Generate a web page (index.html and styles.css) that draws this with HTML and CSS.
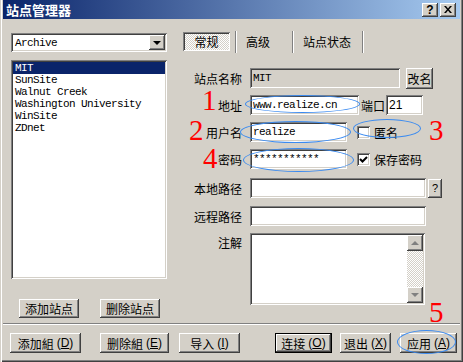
FILE: index.html
```html
<!DOCTYPE html>
<html>
  <head>
    <meta charset="utf-8" />
    <title>站点管理器</title>
    <link rel="stylesheet" href="styles.css">
  </head>
  <body>
    <div class="window">
      <div class="titlebar">
        <span class="titlebar__text">站点管理器</span>
        <div class="titlebar__buttons">
          <span class="tbtn">?</span>
          <span class="tbtn">
            <svg width="8" height="7" viewBox="0 0 8 7"><path d="M0 0h2l2 2.5 2-2.5h2l-3 3.5 3 3.5h-2l-2-2.5-2 2.5h-2l3-3.5z" fill="#000"/></svg>
          </span>
        </div>
      </div>

      <div class="main">
        <div class="sites">
          <div class="combo">
            <span class="combo__text">Archive</span>
            <span class="combo__btn"><span class="arrow-down"></span></span>
          </div>
          <ul class="list">
            <li class="list__item list__item--selected">MIT</li>
            <li class="list__item">SunSite</li>
            <li class="list__item">Walnut Creek</li>
            <li class="list__item">Washington University</li>
            <li class="list__item">WinSite</li>
            <li class="list__item">ZDnet</li>
          </ul>
          <div class="sites__buttons">
            <span class="btn btn--site">添加站点</span>
            <span class="btn btn--site">删除站点</span>
          </div>
        </div>

        <div class="panel">
          <div class="tabs">
            <span class="tab tab--active">常规</span>
            <span class="tabs__sep tabs__sep--first"></span>
            <span class="tab tab--adv">高级</span>
            <span class="tabs__sep tabs__sep--second"></span>
            <span class="tab tab--status">站点状态</span>
            <span class="tabs__sep tabs__sep--third"></span>
          </div>

          <div class="form">
            <div class="row">
              <span class="row__label">站点名称</span>
              <span class="field field--name field--disabled">MIT</span>
              <span class="btn btn--rename">改名</span>
            </div>
            <div class="row">
              <span class="row__label">地址</span>
              <span class="field field--addr">www.realize.cn</span>
              <span class="row__inline-label">端口</span>
              <span class="field field--port">21</span>
            </div>
            <div class="row">
              <span class="row__label">用户名</span>
              <span class="field field--short">realize</span>
              <span class="check"></span>
              <span class="check__label">匿名</span>
            </div>
            <div class="row row--pass">
              <span class="row__label">密码</span>
              <span class="field field--short">***********</span>
              <span class="check">
                <svg width="9" height="9" viewBox="0 0 9 9"><path d="M1 4l2.5 2.5L8 2" stroke="#000" stroke-width="2" fill="none"/></svg>
              </span>
              <span class="check__label">保存密码</span>
            </div>
            <div class="row row--local">
              <span class="row__label">本地路径</span>
              <span class="field field--path"></span>
              <span class="btn btn--help">?</span>
            </div>
            <div class="row">
              <span class="row__label">远程路径</span>
              <span class="field field--path"></span>
            </div>
            <div class="row row--notes">
              <span class="row__label">注解</span>
              <div class="field field--notes">
                <div class="scroll">
                  <span class="scroll__btn"><span class="arrow-up"></span></span>
                  <span class="scroll__track"></span>
                  <span class="scroll__btn"><span class="arrow-down arrow-down--gray"></span></span>
                </div>
              </div>
            </div>
          </div>
        </div>
      </div>

      <div class="footer">
        <div class="footer__line"></div>
        <div class="footer__buttons">
          <span class="btn btn--add-group">添加組 <span class="key">(<u>D</u>)</span></span>
          <span class="btn btn--del-group">删除組 <span class="key">(<u>E</u>)</span></span>
          <span class="btn btn--import">导入 <span class="key">(<u>I</u>)</span></span>
          <span class="btn btn--default btn--connect">连接 <span class="key">(<u>O</u>)</span></span>
          <span class="btn btn--exit">退出 <span class="key">(<u>X</u>)</span></span>
          <span class="btn btn--apply">应用 <span class="key">(<u>A</u>)</span></span>
        </div>
      </div>
    </div>

    <!-- hand-drawn annotations on top of the dialog -->
    <span class="mark mark--1">1</span>
    <span class="mark mark--2">2</span>
    <span class="mark mark--3">3</span>
    <span class="mark mark--4">4</span>
    <span class="mark mark--5">5</span>
    <span class="ring ring--addr"></span>
    <span class="ring ring--user"></span>
    <span class="ring ring--anon"></span>
    <span class="ring ring--pass"></span>
    <span class="ring ring--apply"></span>
  </body>
</html>
```

FILE: styles.css
```css
* {
  box-sizing: border-box;
}

body {
  --face: #d4d0c8;
  --shadow: #808080;
  --dark: #404040;
  --ring: #3a8af0;

  margin: 0;
  width: 463px;
  height: 362px;
  overflow: hidden;
  position: relative;
  background: var(--face);
  font: 12px "Noto Sans CJK SC", sans-serif;
  color: #000;
}

.window {
  width: 463px;
  height: 362px;
  padding: 0 3px 3px;
  background: var(--face);
  box-shadow: inset 1px 0 var(--face), inset 2px 0 #fff, inset -1px -1px var(--dark),
    inset -2px -2px var(--shadow);
}

/* title bar */
.titlebar {
  height: 19px;
  display: flex;
  align-items: center;
  padding: 0 4px 0 3px;
  background: linear-gradient(to right, #0a246a, #a6caf0);
}

.titlebar__text {
  color: #fff;
  font-weight: 700;
  font-size: 13px;
  line-height: 15px;
}

.titlebar__buttons {
  margin-left: auto;
  display: flex;
  gap: 2px;
}

.tbtn {
  width: 16px;
  height: 14px;
  display: flex;
  align-items: center;
  justify-content: center;
  background: var(--face);
  font: 700 12px "Liberation Sans", sans-serif;
  box-shadow: inset -1px -1px var(--dark), inset 1px 1px #fff, inset -2px -2px var(--shadow);
}

/* shared 3d bits */
.btn {
  display: inline-flex;
  align-items: center;
  justify-content: center;
  height: 20px;
  background: var(--face);
  white-space: nowrap;
  box-shadow: inset -1px -1px var(--dark), inset 1px 1px #fff, inset -2px -2px var(--shadow),
    inset 2px 2px var(--face);
}

.btn--default {
  box-shadow: inset 0 0 0 1px #000, inset -2px -2px var(--dark), inset 2px 2px #fff,
    inset -3px -3px var(--shadow);
}

.field {
  display: block;
  height: 20px;
  padding: 0 3px;
  background: #fff;
  font: 11px/20px "Liberation Mono", monospace;
  letter-spacing: -0.6px;
  white-space: nowrap;
  box-shadow: inset 1px 1px var(--shadow), inset -1px -1px #fff, inset 2px 2px var(--dark),
    inset -2px -2px var(--face);
}

.field--disabled {
  background: var(--face);
}

.arrow-down,
.arrow-up {
  width: 0;
  height: 0;
  border-left: 4px solid transparent;
  border-right: 4px solid transparent;
}

.arrow-down {
  border-top: 4px solid #000;
}

.arrow-down--gray {
  border-top-color: var(--shadow);
}

.arrow-up {
  border-bottom: 4px solid var(--shadow);
}

/* layout */
.main {
  height: 304px;
  display: grid;
  grid-template-columns: 156px 1fr;
  column-gap: 16px;
  padding: 13px 0 0 8px;
}

/* left column */
.combo {
  height: 19px;
  margin-top: 1px;
  display: flex;
  align-items: center;
  padding: 2px;
  background: #fff;
  box-shadow: inset 1px 1px var(--shadow), inset -1px -1px #fff, inset 2px 2px var(--dark),
    inset -2px -2px var(--face);
}

.combo__text {
  padding-left: 2px;
  font: 11px "Liberation Mono", monospace;
  letter-spacing: -0.6px;
}

.combo__btn {
  margin-left: auto;
  width: 16px;
  height: 15px;
  display: flex;
  align-items: center;
  justify-content: center;
  background: var(--face);
  box-shadow: inset -1px -1px var(--dark), inset 1px 1px #fff, inset -2px -2px var(--shadow);
}

.list {
  list-style: none;
  margin: 8px 0 0;
  height: 219px;
  padding: 2px;
  background: #fff;
  box-shadow: inset 1px 1px var(--shadow), inset -1px -1px #fff, inset 2px 2px var(--dark),
    inset -2px -2px var(--face);
}

.list__item {
  height: 12px;
  padding-left: 2px;
  font: 11px/12px "Liberation Mono", monospace;
  letter-spacing: -0.6px;
  white-space: nowrap;
}

.list__item--selected {
  background: #0a246a;
  color: #fff;
}

.sites__buttons {
  display: flex;
  gap: 21px;
  margin-top: 20px;
  padding-left: 8px;
}

.btn--site {
  width: 60px;
  height: 19px;
}

/* tabs */
.tabs {
  display: flex;
  align-items: center;
  height: 19px;
}

.tab {
  line-height: 19px;
}

.tab--active {
  width: 47px;
  height: 19px;
  text-align: center;
  background-color: #fff;
  background-image: conic-gradient(var(--face) 25%, #fff 0 50%, var(--face) 0 75%, #fff 0);
  background-size: 2px 2px;
  box-shadow: inset 1px 1px var(--shadow), inset -1px -1px #fff, inset 2px 2px var(--dark);
}

.tabs__sep {
  width: 2px;
  height: 22px;
  border-left: 1px solid var(--shadow);
  border-right: 1px solid #fff;
}

.tabs__sep--first {
  margin-left: 5px;
}

.tab--adv {
  margin-left: 9px;
}

.tabs__sep--second {
  margin-left: 22px;
}

.tab--status {
  margin-left: 9px;
}

.tabs__sep--third {
  margin-left: 11px;
}

/* form */
.form {
  margin-top: 17px;
}

.row {
  display: flex;
  align-items: center;
  height: 20px;
  margin-bottom: 7px;
}

.row--pass {
  margin-bottom: 9px;
}

.row--local {
  margin-bottom: 8px;
}

.row--notes {
  height: 72px;
  align-items: flex-start;
}

.row__label {
  width: 59px;
  margin-right: 8px;
  text-align: right;
  white-space: nowrap;
}

.row--notes .row__label {
  margin-top: 1px;
}

.field--name {
  width: 150px;
}

.btn--rename {
  width: 27px;
  height: 21px;
  margin-left: 6px;
}

.field--addr {
  width: 109px;
}

.row__inline-label {
  margin-left: 2px;
  white-space: nowrap;
}

.field--port {
  width: 37px;
  margin-left: 1px;
  letter-spacing: 0;
  font: 12px/20px "Liberation Sans", sans-serif;
}

.field--short {
  width: 97px;
}

.check {
  width: 13px;
  height: 13px;
  margin-left: 10px;
  display: flex;
  align-items: center;
  justify-content: center;
  background: #fff;
  box-shadow: inset 1px 1px var(--shadow), inset -1px -1px #fff, inset 2px 2px var(--dark),
    inset -2px -2px var(--face);
}

.check__label {
  margin-left: 4px;
  white-space: nowrap;
}

.field--path {
  width: 176px;
}

.btn--help {
  width: 14px;
  height: 19px;
  margin-left: 2px;
  font: 11px "Liberation Sans", sans-serif;
}

.field--notes {
  width: 175px;
  height: 72px;
  padding: 2px 2px 2px 0;
  display: flex;
  justify-content: flex-end;
}

.scroll {
  width: 16px;
  display: flex;
  flex-direction: column;
}

.scroll__btn {
  height: 16px;
  display: flex;
  align-items: center;
  justify-content: center;
  background: var(--face);
  box-shadow: inset -1px -1px var(--dark), inset 1px 1px #fff, inset -2px -2px var(--shadow);
}

.scroll__track {
  flex: 1;
  background-color: #fff;
  background-image: conic-gradient(var(--face) 25%, #fff 0 50%, var(--face) 0 75%, #fff 0);
  background-size: 2px 2px;
}

/* footer */
.footer__line {
  height: 2px;
  border-top: 1px solid var(--shadow);
  border-bottom: 1px solid #fff;
}

.footer__buttons {
  display: flex;
  margin-top: 8px;
  padding-left: 7px;
}

.key {
  margin-left: 3px;
  font: 12px "Liberation Sans", sans-serif;
}

.btn--add-group {
  width: 71px;
}

.btn--del-group {
  width: 69px;
  margin-left: 19px;
}

.btn--import {
  width: 61px;
  margin-left: 10px;
}

.btn--connect {
  width: 57px;
  margin-left: 35px;
}

.btn--exit {
  width: 51px;
  margin-left: 8px;
}

.btn--apply {
  width: 57px;
  margin-left: 9px;
}

/* annotations */
.mark {
  position: absolute;
  color: #ff0000;
  font: 29px/20px "Liberation Serif", serif;
}

.mark--1 {
  left: 202px;
  top: 90px;
}

.mark--2 {
  left: 189px;
  top: 120px;
}

.mark--3 {
  left: 429px;
  top: 120px;
}

.mark--4 {
  left: 203px;
  top: 148px;
}

.mark--5 {
  left: 429px;
  top: 302px;
}

.ring {
  position: absolute;
  border: 1px solid var(--ring);
  border-radius: 50%;
}

.ring--addr {
  left: 245px;
  top: 95px;
  width: 115px;
  height: 18px;
}

.ring--user {
  left: 240px;
  top: 121px;
  width: 111px;
  height: 22px;
}

.ring--anon {
  left: 353px;
  top: 119px;
  width: 68px;
  height: 19px;
}

.ring--pass {
  left: 243px;
  top: 148px;
  width: 111px;
  height: 24px;
}

.ring--apply {
  left: 397px;
  top: 330px;
  width: 59px;
  height: 24px;
}
```
